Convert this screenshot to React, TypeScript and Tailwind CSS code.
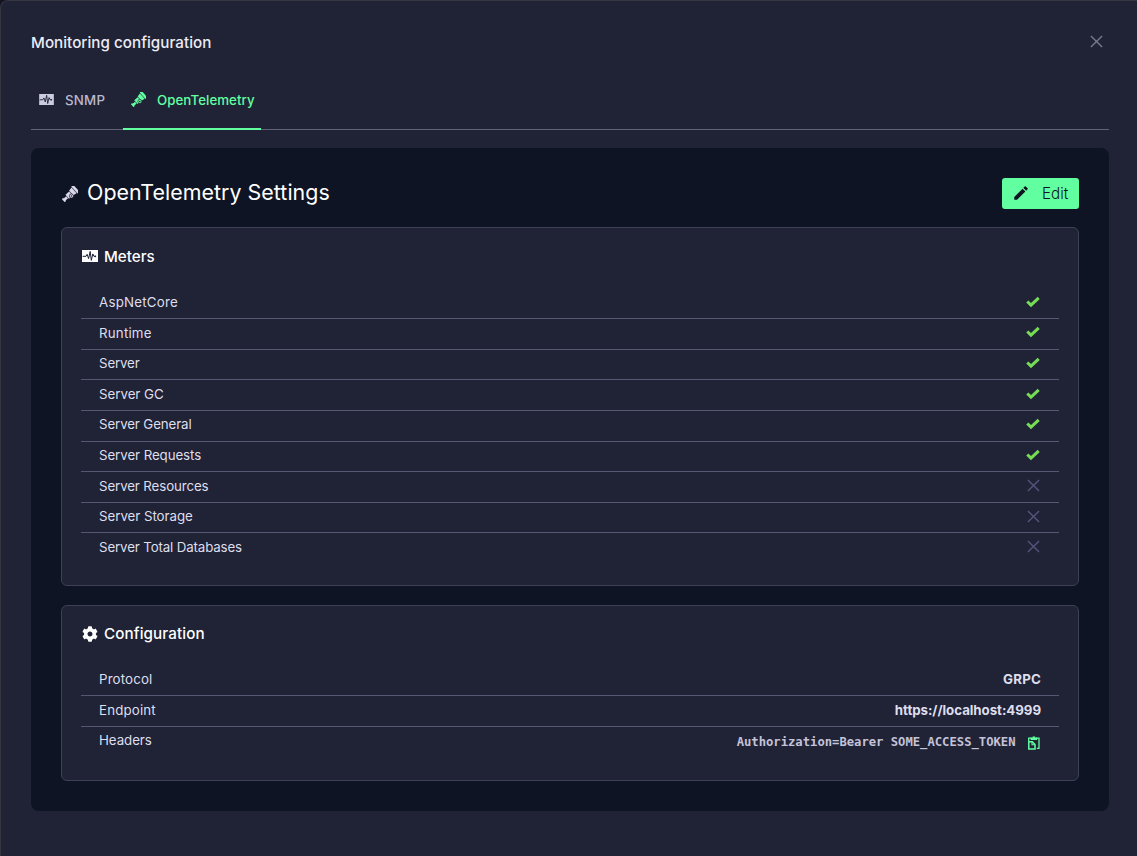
import type { ReactNode } from "react";
import { FaCog } from "react-icons/fa";
import { MdEdit } from "react-icons/md";

function PulseIcon({ className }: { className: string }) {
  return (
    <svg viewBox="0 0 16 12" className={className}>
      <rect width="16" height="12" fill="currentColor" />
      <path
        d="M0.6 6.3H4L5.2 4.3L6.6 8.6L8.2 1.4L9.3 10.4L10.8 3.9L11.9 6.3H13.6"
        fill="none"
        stroke="#202236"
        strokeWidth="1"
      />
      <circle cx="13.3" cy="6.3" r="0.9" fill="#202236" />
    </svg>
  );
}

function TelescopeIcon({ className }: { className: string }) {
  return (
    <svg viewBox="0 0 16 16" className={className} fill="currentColor">
      <g transform="rotate(-42 8 8)">
        <path d="M-1.4 6.3H0.4V7.1H3.6V9.9H0.4V10.5H-1.4Z" />
        <path d="M4.1 5.6H9V10.8H4.1Z" />
        <path d="M9.5 5L13.4 4.2V11.8L9.5 11.2Z" />
        <path d="M13.9 3.3H16.6V12.6H13.9Z" />
      </g>
      <circle cx="9.4" cy="10" r="2.1" stroke="#202236" strokeWidth="0.7" />
      <circle cx="9.4" cy="10" r="0.8" fill="#202236" />
    </svg>
  );
}

function CheckIcon() {
  return (
    <svg viewBox="0 0 14 12" className="mr-px mb-[3px] h-3 w-3.5 text-[#76dc55]">
      <path d="M1.3 5.5L5 9.1L12.7 1.9" fill="none" stroke="currentColor" strokeWidth="3.1" />
    </svg>
  );
}

function CrossIcon({ className }: { className: string }) {
  return (
    <svg viewBox="0 0 14 14" className={className}>
      <path d="M1 1L13 13M13 1L1 13" stroke="currentColor" strokeWidth="1.5" />
    </svg>
  );
}

function PasteIcon() {
  return (
    <svg viewBox="0 0 12 14" className="h-3.5 w-3 text-[#62ffa1]">
      <path d="M0.7 5V2.2H3.5M8 2.2H11V12.3H8.8" fill="none" stroke="currentColor" strokeWidth="1.3" />
      <path d="M2.6 1.4H4.6V0.4H7.2V1.4H9.2V4H2.6Z" fill="currentColor" />
      <path d="M0.8 5.8H4.3L7 8.5V13H0.8Z" fill="none" stroke="currentColor" strokeWidth="1.5" />
      <path d="M4 5.6V8.7H7" fill="none" stroke="currentColor" strokeWidth="1.1" />
    </svg>
  );
}

const meters = [
  { name: "AspNetCore", enabled: true, tracking: "tracking-[0.22px]" },
  { name: "Runtime", enabled: true, tracking: "tracking-[0.2px]" },
  { name: "Server", enabled: true, tracking: "tracking-[-0.15px]" },
  { name: "Server GC", enabled: true, tracking: "tracking-[-0.02px]" },
  { name: "Server General", enabled: true, tracking: "tracking-[-0.12px]" },
  { name: "Server Requests", enabled: true, tracking: "tracking-[-0.08px]" },
  { name: "Server Resources", enabled: false, tracking: "tracking-[-0.12px]" },
  { name: "Server Storage", enabled: false, tracking: "tracking-[-0.04px]" },
  { name: "Server Total Databases", enabled: false, tracking: "tracking-[-0.14px]" },
];

function Row({ label, tracking, children }: { label: string; tracking: string; children: ReactNode }) {
  return (
    <div className="flex h-[30.6px] items-center justify-between border-b border-[#545870] px-[18px] last:border-b-0 last:pb-px">
      <span className={`pb-[0.7px] ${tracking}`}>{label}</span>
      {children}
    </div>
  );
}

function Card({ icon, title, className, children }: { icon: ReactNode; title: ReactNode; className: string; children: ReactNode }) {
  return (
    <section className={`rounded-md border border-[#3e4055] bg-[#202236] px-[19px] ${className}`}>
      <h3 className="flex h-6 items-center gap-1.5 text-[15.2px] font-[450] text-white">
        {icon}
        {title}
      </h3>
      <div className="mt-[19.6px] text-[13.3px] text-[#dedeec]">{children}</div>
    </section>
  );
}

export default function App() {
  return (
    <div className="h-[856px] w-full bg-[#12131f] font-['Inter',sans-serif]">
      <div className="flex h-full flex-col rounded-tl-lg border-t border-l border-[#35363f] bg-[#202236] pr-7 pl-[30px]">
        <header className="flex h-[81px] items-center justify-between pr-1.5">
          <h1 className="pt-[3px] text-[15.2px] font-[480] tracking-[0.03px] text-[#ececf4]">Monitoring configuration</h1>
          <CrossIcon className="size-[13px] text-[#77798c]" />
        </header>
        <nav className="flex h-12 items-stretch border-b border-[#60627a] text-[13.3px] font-[450]">
          <div className="flex w-[92px] items-start pt-[9px] pl-2 text-[#b9b9cf]">
            <PulseIcon className="mt-[3px] mr-[11px] h-[11px] w-[15px] text-[#cdcbe0]" />
            <span className="tracking-[0.2px]">SNMP</span>
          </div>
          <div className="-mb-px flex w-[138px] items-start border-b-2 border-[#62ffa1] pt-[9px] pl-2 text-[#62ffa1]">
            <TelescopeIcon className="mt-px mr-[11px] size-[15px]" />
            <span className="tracking-[0.04px]">OpenTelemetry</span>
          </div>
        </nav>
        <main className="mt-[18px] h-[663px] rounded-lg bg-[#0e1423] px-[30px] pt-[30px]">
          <div className="flex h-[31px] items-center justify-between">
            <h2 className="flex items-center pb-0.5 text-[21.4px] text-white">
              <TelescopeIcon className="mt-[3px] mr-[9px] ml-px size-4 text-[#d9d7ea]" />
              <span className="tracking-[0.04px]">OpenTelemetry Settings</span>
            </h2>
            <button className="flex h-[31px] w-[77px] items-center rounded-[3px] bg-[#62ffa1] pl-2.5 text-[15.2px] font-light text-[#0e1422]">
              <MdEdit className="mr-3 mb-px size-[18px]" />
              <span className="pt-0.5">Edit</span>
            </button>
          </div>
          <Card
            className="mt-[18px] h-[359px] pt-[17px]"
            icon={<PulseIcon className="mb-0.5 ml-px h-3 w-4" />}
            title={<span>Meters</span>}
          >
            {meters.map((meter) => (
              <Row key={meter.name} label={meter.name} tracking={meter.tracking}>
                {meter.enabled ? <CheckIcon /> : <CrossIcon className="mr-[0.5px] mb-[2.5px] h-[13px] w-[15px] text-[#54557a]" />}
              </Row>
            ))}
          </Card>
          <Card
            className="mt-[19px] h-[176px] pt-4"
            icon={<FaCog className="mb-px ml-px size-4" />}
            title={<span className="tracking-[0.1px]">Configuration</span>}
          >
            <Row label="Protocol" tracking="tracking-[0.15px]">
              <span className="font-bold tracking-[0.2px]">GRPC</span>
            </Row>
            <Row label="Endpoint" tracking="tracking-[0.16px]">
              <span className="font-bold tracking-[-0.05px]">https://localhost:4999</span>
            </Row>
            <Row label="Headers" tracking="tracking-[-0.06px]">
              <span className="flex items-center gap-3 pt-[3px] pr-[1.5px]">
                <code className="pb-0.5 font-['DejaVu_Sans_Mono',monospace] text-[12.2px] font-bold text-[#c4c3d8]">
                  Authorization=Bearer SOME_ACCESS_TOKEN
                </code>
                <PasteIcon />
              </span>
            </Row>
          </Card>
        </main>
      </div>
    </div>
  );
}
